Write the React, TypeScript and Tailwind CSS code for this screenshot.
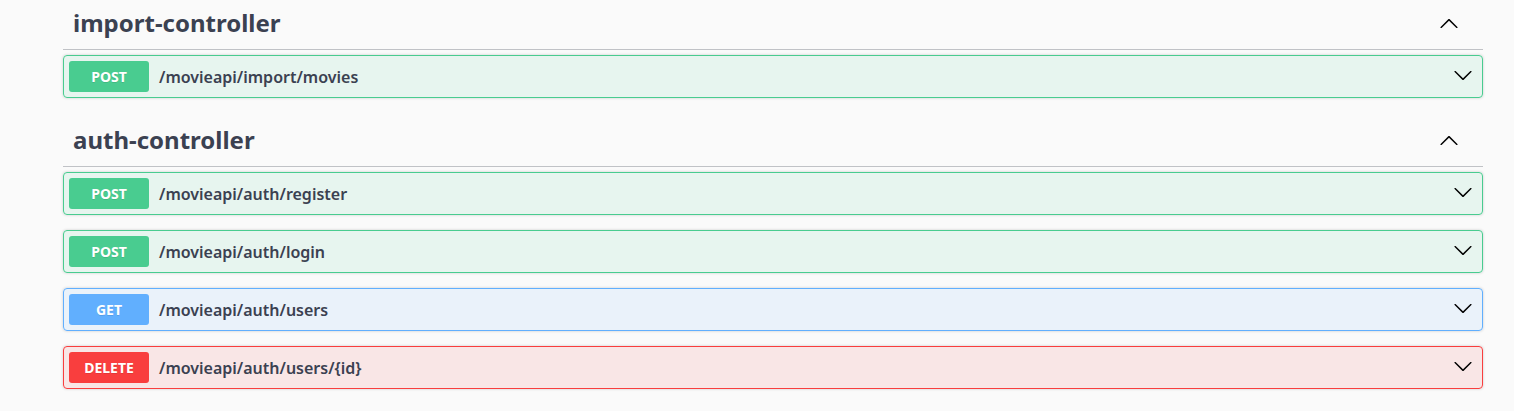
const SECTIONS = [
  {
    name: "import-controller",
    ops: [{ method: "POST", path: "/movieapi/import/movies" }],
  },
  {
    name: "auth-controller",
    ops: [
      { method: "POST", path: "/movieapi/auth/register" },
      { method: "POST", path: "/movieapi/auth/login" },
      { method: "GET", path: "/movieapi/auth/users" },
      { method: "DELETE", path: "/movieapi/auth/users/{id}" },
    ],
  },
];

const METHOD_STYLES: Record<string, { box: string; badge: string }> = {
  POST: { box: "border-[#49cc90] bg-[rgba(73,204,144,0.1)]", badge: "bg-[#49cc90]" },
  GET: { box: "border-[#61affe] bg-[rgba(97,175,254,0.1)]", badge: "bg-[#61affe]" },
  DELETE: { box: "border-[#f93e3e] bg-[rgba(249,62,62,0.1)]", badge: "bg-[#f93e3e]" },
};

function ArrowUp() {
  return (
    <svg width="20" height="20" viewBox="0 0 20 20" className="fill-black">
      <path d="M17.418 14.908c.272.268.709.268.979 0s.271-.701 0-.969l-7.908-7.83c-.27-.268-.707-.268-.979 0l-7.908 7.83c-.27.268-.27.701 0 .969.271.268.709.268.979 0L10 7.767l7.418 7.141z" />
    </svg>
  );
}

function ArrowDown() {
  return (
    <svg width="20" height="20" viewBox="0 0 20 20" className="fill-black">
      <path d="M17.418 6.109c.272-.268.709-.268.979 0s.271.701 0 .969l-7.908 7.83c-.27.268-.707.268-.979 0l-7.908-7.83c-.27-.268-.27-.701 0-.969.271-.268.709-.268.979 0L10 13.25l7.418-7.141z" />
    </svg>
  );
}

export default function App() {
  return (
    <main
      className="min-h-[411px] bg-[#fafafa] text-[#3b4151] flex flex-col"
      style={{ fontFamily: '"Noto Sans", "Open Sans", sans-serif' }}
    >
      <div className="ml-[63px] w-[1420px] flex flex-col -mt-[4px]">
        {SECTIONS.map((section) => (
          <section key={section.name} className="flex flex-col mb-[15px]">
            <div className="h-[54px] flex items-center justify-between pl-[10px] pr-[24px] border-b border-[rgba(59,65,81,0.3)] mb-[5px]">
              <h3 className="text-[24px] font-bold leading-[33px]">{section.name}</h3>
              <ArrowUp />
            </div>
            {section.ops.map((op) => {
              const s = METHOD_STYLES[op.method];
              return (
                <div
                  key={op.path}
                  className={`flex items-center border rounded-[4px] mb-[15px] last:mb-0 p-[5px] pr-[9px] shadow-[0_0_3px_rgba(0,0,0,0.19)] ${s.box}`}
                >
                  <span
                    className={`w-[80px] h-[31px] flex items-center justify-center rounded-[3px] text-white text-[14px] font-bold [text-shadow:0_1px_0_rgba(0,0,0,0.1)] ${s.badge}`}
                  >
                    {op.method}
                  </span>
                  <span className="px-[10px] text-[16px] font-semibold flex-1">{op.path}</span>
                  <span className="mb-[3px] flex">
                    <ArrowDown />
                  </span>
                </div>
              );
            })}
          </section>
        ))}
      </div>
    </main>
  );
}
